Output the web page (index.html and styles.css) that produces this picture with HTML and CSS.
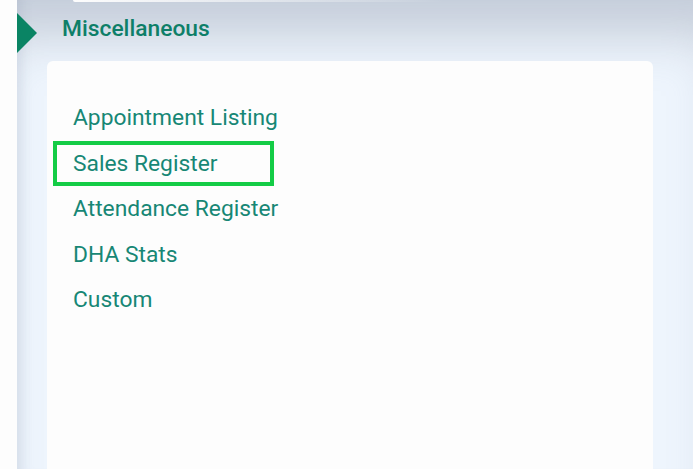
FILE: index.html
```html
<!DOCTYPE html>
<html lang="en">
<head>
  <meta charset="UTF-8">
  <title>Miscellaneous</title>
  <link rel="stylesheet" href="styles.css">
</head>
<body>
  <div class="page">
    <div class="strip"></div>
    <div class="panel">
      <div class="card-above"></div>
      <div class="section-head">
        <span class="marker"></span>
        <h2>Miscellaneous</h2>
      </div>
      <div class="card">
        <ul class="links">
          <li><a href="#">Appointment Listing</a></li>
          <li class="active"><a href="#">Sales Register</a></li>
          <li><a href="#">Attendance Register</a></li>
          <li><a href="#">DHA Stats</a></li>
          <li><a href="#">Custom</a></li>
        </ul>
      </div>
    </div>
  </div>
</body>
</html>
```

FILE: styles.css
```css
html, body {
  margin: 0;
  height: 100%;
  overflow: hidden;
}
body {
  font-family: Roboto, "Liberation Sans", sans-serif;
  background: #fdfdfd;
}
.page {
  display: flex;
  height: 100%;
}
.strip {
  width: 17px;
  background: #fdfdfd;
}
.panel {
  flex: 1;
  display: flex;
  flex-direction: column;
  background: #eef5fd;
  box-shadow: inset 14px 0 12px -10px rgba(120, 135, 160, 0.18),
              inset 0 64px 50px -28px rgba(140, 150, 170, 0.42);
}
.card-above {
  height: 2px;
  margin-left: 56px;
  background: linear-gradient(to right, #fdfdfd, rgba(253, 253, 253, 0) 60%);
  border-radius: 0 0 0 4px;
}
.section-head {
  display: flex;
  align-items: center;
  height: 59px;
}
.marker {
  width: 0;
  height: 0;
  border-top: 20px solid transparent;
  border-bottom: 20px solid transparent;
  border-left: 20px solid #0a8464;
  margin-top: 3px;
}
.section-head h2 {
  margin: -6px 0 0 25px;
  font-size: 22.8px;
  font-weight: 500;
  color: #0e7f68;
}
.card {
  flex: 1;
  margin: 0 40px 0 30px;
  background: #fdfdfd;
  border-radius: 6px 6px 0 0;
  padding-top: 34px;
}
.links {
  list-style: none;
  margin: 0;
  padding: 0 0 0 6px;
}
.links li {
  width: 221px;
  height: 45.5px;
  box-sizing: border-box;
  border: 4px solid transparent;
  display: flex;
  align-items: center;
  padding-left: 16px;
  white-space: nowrap;
}
.links li.active {
  border-color: #14cc46;
}
.links a {
  font-size: 22.8px;
  color: #178775;
  text-decoration: none;
}
```
